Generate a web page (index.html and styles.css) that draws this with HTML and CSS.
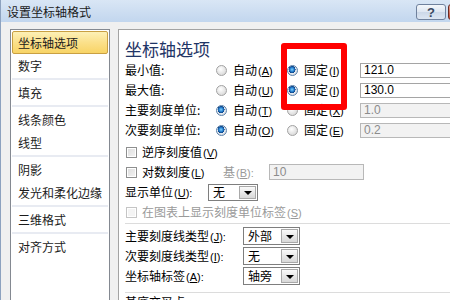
FILE: index.html
```html
<!DOCTYPE html>
<html>
<head>
<meta charset="utf-8">
<title>设置坐标轴格式</title>
<link rel="stylesheet" href="styles.css">
</head>
<body>
<div class="window">
  <div class="titlebar">
    <span class="title">设置坐标轴格式</span>
    <span class="help">?</span>
    <span class="close"></span>
  </div>
  <div class="main">
    <div class="nav">
      <div class="item sel">坐标轴选项</div>
      <div class="item">数字</div>
      <div class="sep"></div>
      <div class="item">填充</div>
      <div class="sep"></div>
      <div class="item">线条颜色</div>
      <div class="item">线型</div>
      <div class="sep"></div>
      <div class="item">阴影</div>
      <div class="item">发光和柔化边缘</div>
      <div class="sep"></div>
      <div class="item">三维格式</div>
      <div class="sep"></div>
      <div class="item">对齐方式</div>
    </div>
    <div class="panel">
      <div class="heading">坐标轴选项</div>
      <div class="grid">
        <span class="lbl">最小值:</span>
        <span class="opt"><i class="radio"></i><span>自动<span class="mn">(<u>A</u>)</span></span></span>
        <span class="opt"><i class="radio on"></i><span>固定<span class="mn">(<u>I</u>)</span></span></span>
        <span class="tb">121.0</span>

        <span class="lbl">最大值:</span>
        <span class="opt"><i class="radio"></i><span>自动<span class="mn">(<u>U</u>)</span></span></span>
        <span class="opt"><i class="radio on"></i><span>固定<span class="mn">(<u>I</u>)</span></span></span>
        <span class="tb">130.0</span>

        <span class="lbl">主要刻度单位:</span>
        <span class="opt"><i class="radio on"></i><span>自动<span class="mn">(<u>T</u>)</span></span></span>
        <span class="opt"><i class="radio"></i><span>固定<span class="mn">(<u>X</u>)</span></span></span>
        <span class="tb dis">1.0</span>

        <span class="lbl">次要刻度单位:</span>
        <span class="opt"><i class="radio on"></i><span>自动<span class="mn">(<u>O</u>)</span></span></span>
        <span class="opt"><i class="radio"></i><span>固定<span class="mn">(<u>E</u>)</span></span></span>
        <span class="tb dis">0.2</span>
      </div>

      <div class="checks">
        <div class="crow"><i class="cb"></i><span>逆序刻度值<span class="mn">(<u>V</u>)</span></span></div>
        <div class="crow">
          <i class="cb"></i><span class="logtxt">对数刻度<span class="mn">(<u>L</u>)</span></span>
          <span class="base dim">基<span class="mn">(<u>B</u>):</span></span>
          <span class="tb dis tall">10</span>
        </div>
        <div class="crow">
          <span class="unitlbl">显示单位<span class="mn">(<u>U</u>):</span></span>
          <span class="dd small"><span class="ddtxt">无</span><span class="ddbtn"><i class="tri"></i></span></span>
        </div>
        <div class="crow dim"><i class="cb off"></i><span>在图表上显示刻度单位标签<span class="mn">(<u>S</u>)</span></span></div>
      </div>

      <div class="hr"></div>

      <div class="drops">
        <div class="drow">
          <span class="dlbl">主要刻度线类型<span class="mn">(<u>J</u>):</span></span>
          <span class="dd"><span class="ddtxt">外部</span><span class="ddbtn"><i class="tri"></i></span></span>
        </div>
        <div class="drow">
          <span class="dlbl">次要刻度线类型<span class="mn">(<u>I</u>):</span></span>
          <span class="dd"><span class="ddtxt">无</span><span class="ddbtn"><i class="tri"></i></span></span>
        </div>
        <div class="drow">
          <span class="dlbl">坐标轴标签<span class="mn">(<u>A</u>):</span></span>
          <span class="dd"><span class="ddtxt">轴旁</span><span class="ddbtn"><i class="tri"></i></span></span>
        </div>
      </div>

      <div class="hr hr2"></div>
      <div class="cut">基底交叉点:</div>

      <div class="marker"></div>
    </div>
  </div>
</div>
</body>
</html>
```

FILE: styles.css
```css
* { box-sizing: border-box; }
html, body { margin: 0; padding: 0; }
body {
  width: 450px;
  height: 300px;
  overflow: hidden;
  background: #f0f0f0;
  font: 12px/1 "Noto Sans CJK SC", "Noto Sans", sans-serif;
  color: #000;
  text-autospace: no-autospace;
}
.mn {
  font-family: "Liberation Sans", sans-serif;
  font-size: 11px;
  margin-left: 1px;
}
u { text-decoration: underline; text-underline-offset: 1px; }
i { display: inline-block; font-style: normal; }

.window {
  height: 300px;
  overflow: hidden;
  border-left: 1px solid #8da2bf;
  display: flex;
  flex-direction: column;
}

/* title bar */
.titlebar {
  height: 22px;
  flex: none;
  display: flex;
  align-items: flex-start;
  padding-left: 6px;
  background: linear-gradient(#d9e6f5, #c2d6ee);
  overflow: hidden;
}
.title { margin-top: 5px; font-size: 12px; line-height: 14px; color: #1a1a1a; }
.help {
  flex: none;
  margin-left: auto;
  margin-top: 4px;
  width: 30px;
  height: 16px;
  border: 1px solid #6f819d;
  border-radius: 3px;
  background: linear-gradient(#f4f7fb, #dde6f1 50%, #ccd8e8 52%, #dce6f2);
  display: flex;
  align-items: center;
  justify-content: center;
  font: bold 13px/1 "Liberation Sans", sans-serif;
  color: #3a4860;
}
.close {
  flex: none;
  width: 40px;
  height: 16px;
  margin-top: 4px;
  margin-left: 2px;
  margin-right: -38px;
  border: 1px solid #6b2b22;
  border-radius: 3px;
  background: linear-gradient(#e9a795, #c44a33);
}

/* main area */
.main {
  flex: none;
  height: 300px;
  display: flex;
  gap: 8px;
  padding: 7px 0 0 9px;
}

.nav {
  flex: none;
  width: 100px;
  height: 290px;
  background: #fff;
  border: 1px solid #848991;
  padding: 1px;
}
.item {
  height: 23px;
  display: flex;
  align-items: center;
  padding-left: 6px;
  font-size: 12px;
  color: #1b1b1b;
}
.item.sel {
  border: 1px solid #c9a043;
  border-radius: 2px;
  padding-left: 5px;
  background: linear-gradient(#fdf0b6, #fbe08a 50%, #f8d466);
}
.sep {
  height: 2px;
  margin: 1px 0;
  background: #e8ebf2;
}

.panel {
  flex: 1;
  position: relative;
  background: #fff;
  border-top: 1px solid #a3a3a3;
  border-left: 1px solid #a3a3a3;
  padding-left: 6px;
}
.heading {
  padding-top: 8px;
  height: 30px;
  font-size: 17px;
  line-height: 22px;
  color: #1f3566;
}

.grid {
  display: grid;
  grid-template-columns: 91px 71px 73px 100px;
  grid-auto-rows: 20px;
  align-items: center;
}
.lbl { white-space: nowrap; }
.opt { display: flex; align-items: center; gap: 6px; white-space: nowrap; }

.radio {
  width: 11px;
  height: 11px;
  border-radius: 50%;
  border: 1px solid #a2a2a2;
  background: radial-gradient(circle at 40% 35%, #ffffff, #e2e2e2 60%, #cfcfcf);
}
.radio.on {
  border-color: #5a7fa8;
  background: radial-gradient(circle at 45% 40%, #7fd0ff 0, #1f78c8 2.2px, #0d3f80 3.4px, #e9eef4 3.6px, #d7dde4 5px);
}

.tb {
  display: block;
  height: 15px;
  width: 100px;
  border: 1px solid #a5a5a5;
  background: #fff;
  padding-left: 3px;
  font: 12px/13px "Liberation Sans", sans-serif;
  color: #000;
}
.tb.dis { background: #f2f2f2; color: #8c8c8c; border-color: #b8b8b8; }
.tb.tall { height: 16px; width: 95px; line-height: 14px; }

.checks { padding-top: 2px; }
.crow {
  height: 20px;
  display: flex;
  align-items: center;
  white-space: nowrap;
}
.cb {
  width: 11px;
  height: 11px;
  margin-left: 1px;
  margin-right: 5px;
  border: 1px solid #8e8f8f;
  background: linear-gradient(135deg, #dcdcdc, #f4f4f4);
  box-shadow: inset 0 0 0 1px #fff;
}
.cb.off { border-color: #c5c5c5; background: #f4f4f4; }
.dim { color: #9a9a9a; }
.logtxt { width: 81px; }
.base { width: 46px; }
.unitlbl { width: 83px; }

.dd {
  display: flex;
  align-items: stretch;
  height: 18px;
  width: 57px;
  border: 1px solid #7e7e7e;
  background: #fff;
}
.dd.small { width: 50px; height: 17px; }
.ddtxt {
  flex: 1;
  display: flex;
  align-items: center;
  padding-left: 4px;
}
.ddbtn {
  flex: none;
  width: 17px;
  margin: 1px;
  border: 1px solid #a9a9a9;
  background: linear-gradient(#fafafa, #e8e8e8 50%, #d8d8d8);
  display: flex;
  align-items: center;
  justify-content: center;
}
.tri {
  width: 0;
  height: 0;
  border-left: 4px solid transparent;
  border-right: 4px solid transparent;
  border-top: 4px solid #000;
  margin-top: 1px;
}

.hr {
  height: 1px;
  background: #dcdcdc;
  margin-top: 1px;
}
.drops { padding-top: 2px; }
.drow {
  height: 20px;
  display: flex;
  align-items: center;
  white-space: nowrap;
}
.dlbl { width: 118px; }
.hr2 { margin-top: 6px; }
.cut { line-height: 16px; padding-top: 1px; }

.marker {
  position: absolute;
  left: 162px;
  top: 13px;
  width: 66px;
  height: 67px;
  border: 6px solid #ff0000;
  border-radius: 3px;
}
```
